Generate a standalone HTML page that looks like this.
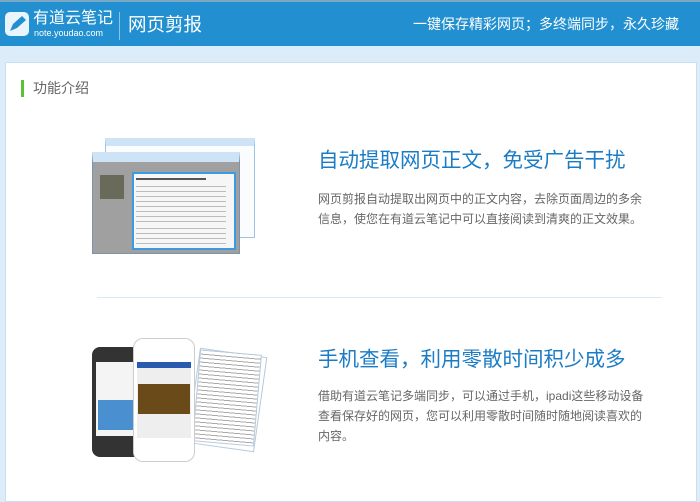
<!DOCTYPE html>
<html><head><meta charset="utf-8"><style>
*{margin:0;padding:0;box-sizing:border-box}
body{width:700px;height:490px;overflow:hidden;background:#dcedf9;font-family:"Liberation Sans","Noto Sans CJK SC",sans-serif;position:relative}
.hd{position:absolute;left:0;top:0;width:700px;height:46px;background:#2290d0;border-top:2px solid #7aa7c4}
.abs{position:absolute}
.panel{position:absolute;left:5px;top:62px;width:692px;height:440px;background:#fff;border:1px solid #c9e0f2}
h2{position:absolute;font-weight:normal;font-size:20.5px;color:#1b7cc6;white-space:nowrap;line-height:26px}
p.d{position:absolute;font-size:12px;color:#666;line-height:20px;width:335px}
</style></head><body>
<div class="hd">
 <svg class="abs" style="left:5px;top:10px" width="24" height="24"><rect x="0" y="0" width="24" height="24" rx="5" fill="#fff" opacity=".9"/><path d="M5 19 L8 12 L17 4 L21 8 L12 16Z" fill="#2290d0"/></svg>
 <div class="abs" style="left:33px;top:8px;color:#fff;font-size:16px;line-height:18px">有道云笔记</div>
 <div class="abs" style="left:34px;top:26px;color:#fff;font-size:9px;line-height:11px">note.youdao.com</div>
 <div class="abs" style="left:119px;top:10px;width:1px;height:28px;background:#8cc3e6"></div>
 <div class="abs" style="left:128px;top:12px;color:#fff;font-size:18.5px;line-height:22px">网页剪报</div>
 <div class="abs" style="left:413px;top:13px;color:#fff;font-size:14px;line-height:18px">一键保存精彩网页；多终端同步，永久珍藏</div>
</div>
<div class="panel"></div>
<div class="abs" style="left:21px;top:80px;width:3px;height:17px;background:#5cbf3a"></div>
<div class="abs" style="left:33px;top:79px;font-size:14px;color:#666;line-height:18px">功能介绍</div>

<div class="abs" style="left:105px;top:138px;width:150px;height:100px;background:#fafcfe;border:1px solid #9cc2e4;border-top:8px solid #cfe3f6"></div>
<div class="abs" style="left:92px;top:152px;width:148px;height:102px;background:#a0a0a0;border:1px solid #7a94ad;border-top:10px solid #cfe3f6"></div>
<div class="abs" style="left:100px;top:175px;width:24px;height:24px;background:#6a6a5a"></div>
<div class="abs" style="left:132px;top:172px;width:104px;height:78px;background:#f6f6f6;border:2px solid #3c9ae0"></div>
<div class="abs" style="left:136px;top:178px;width:70px;height:2px;background:#555"></div>
<div class="abs" style="left:136px;top:186px;width:90px;height:40px;background:repeating-linear-gradient(#bbb 0 1px,transparent 1px 5px)"></div>
<div class="abs" style="left:136px;top:228px;width:90px;height:18px;background:repeating-linear-gradient(#bbb 0 1px,transparent 1px 5px)"></div>

<h2 style="left:318px;top:148px">自动提取网页正文，免受广告干扰</h2>
<p class="d" style="left:318px;top:189px">网页剪报自动提取出网页中的正文内容，去除页面周边的多余信息，使您在有道云笔记中可以直接阅读到清爽的正文效果。</p>

<div class="abs" style="left:97px;top:297px;width:565px;height:1px;background:#dbe9f3"></div>

<div class="abs" style="left:193px;top:352px;width:68px;height:96px;background:#fff;border:1px solid #b5c9dc;transform:rotate(8deg)"></div>
<div class="abs" style="left:196px;top:352px;width:62px;height:92px;background:repeating-linear-gradient(#fff 0 3px,#aaa 3px 4px);border:1px solid #b5c9dc;transform:rotate(5deg)"></div>
<div class="abs" style="left:92px;top:347px;width:52px;height:110px;background:#333;border-radius:8px"></div>
<div class="abs" style="left:96px;top:362px;width:44px;height:74px;background:#f4f4f4"></div>
<div class="abs" style="left:98px;top:400px;width:40px;height:30px;background:#4a8fd0"></div>
<div class="abs" style="left:133px;top:338px;width:62px;height:124px;background:#fff;border:1px solid #ccc;border-radius:10px"></div>
<div class="abs" style="left:137px;top:362px;width:54px;height:76px;background:#eee"></div>
<div class="abs" style="left:137px;top:362px;width:54px;height:6px;background:#2a5ab0"></div>
<div class="abs" style="left:138px;top:384px;width:52px;height:30px;background:#6b4a1a"></div>

<h2 style="left:318px;top:347px">手机查看，利用零散时间积少成多</h2>
<p class="d" style="left:318px;top:386px">借助有道云笔记多端同步，可以通过手机，ipadi这些移动设备查看保存好的网页，您可以利用零散时间随时随地阅读喜欢的内容。</p>
</body></html>
